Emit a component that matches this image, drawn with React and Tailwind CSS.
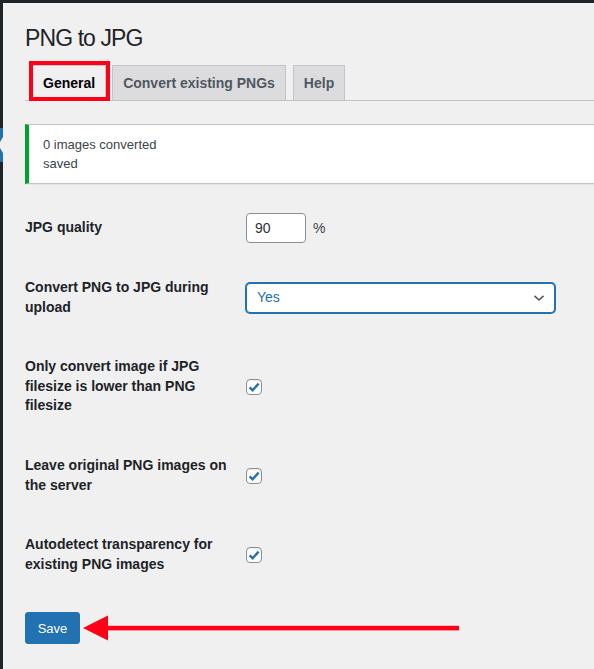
import React from "react";

const Check = () => (
  <span className="flex h-4 w-4 items-center justify-center rounded-[4px] border border-[#8c8f94] bg-white shadow-[inset_0_1px_2px_rgba(0,0,0,0.1)]">
    <svg width="14" height="14" viewBox="0 0 14 14">
      <path d="M2.6 7.4 L5.6 10.3 L11.6 3.6" fill="none" stroke="#2271b1" strokeWidth="2.4" strokeLinejoin="miter" />
    </svg>
  </span>
);

function Row({ label, children }) {
  return (
    <div className="flex items-center">
      <div className="w-[221px] shrink-0 py-[20px] pr-[10px] text-[14px] font-bold leading-[19.6px] whitespace-nowrap text-[#1d2327]">
        {label}
      </div>
      <div className="py-[15px] flex items-center">{children}</div>
    </div>
  );
}

export default function App() {
  return (
    <div
      className="min-h-[669px] w-[594px] overflow-hidden bg-[#f0f0f1]"
      style={{ fontFamily: '"Liberation Sans", Arial, sans-serif' }}
    >
      <div className="h-[3px] bg-[#1d2327]" />
      <div className="flex min-h-[666px]">
        {/* admin menu edge */}
        <div className="w-[3px] shrink-0 bg-[#1d2327] pt-[125px]">
          <svg width="3" height="34" viewBox="0 0 3 34" className="block">
            <rect width="3" height="34" fill="#2271b1" />
            <polygon points="3,9 0,14 0,20 3,25" fill="#f0f0f1" />
          </svg>
        </div>

        <div className="min-w-0 flex-1 pl-[22px]">
          <h1 className="pt-[20px] text-[23px] font-normal leading-[30px] tracking-[-0.9px] text-[#1d2327]">
            PNG to JPG
          </h1>

          {/* tabs */}
          <div className="mt-[12px] flex border-b border-[#c3c4c7] pl-[7px]">
            <div className="relative -mb-px">
              <div className="border border-[#c3c4c7] border-b-[#f0f0f1] bg-[#f0f0f1] px-[10px] py-[5px] text-[14px] font-bold leading-[24px] text-black">
                General
              </div>
              <span className="pointer-events-none absolute -top-[4px] -left-[3px] -right-[4px] bottom-0 border-[4px] border-[#ff0019]" />
            </div>
            <div className="-mb-px ml-[6px] border border-[#c3c4c7] bg-[#dcdcde] px-[10px] py-[5px] text-[14px] font-bold leading-[24px] text-[#50575e]">
              Convert existing PNGs
            </div>
            <div className="-mb-px ml-[7px] border border-[#c3c4c7] bg-[#dcdcde] px-[10px] py-[5px] text-[14px] font-bold leading-[24px] text-[#50575e]">
              Help
            </div>
          </div>

          {/* notice */}
          <div className="-mr-[20px] mt-[23px] border-y border-r border-[#c3c4c7] border-l-[4px] border-l-[#00a32a] bg-white pl-[14px] pr-[12px] py-px shadow-[0_1px_1px_rgba(0,0,0,0.04)]">
            <p className="my-[6.5px] py-[2px] text-[13px] leading-[19.5px] text-[#3c434a]">
              0 images converted
              <br />
              saved
            </p>
          </div>

          {/* form */}
          <div className="mt-[14px]">
            <Row label="JPG quality">
              <input
                defaultValue="90"
                className="h-[30px] w-[60px] rounded-[4px] border border-[#8c8f94] bg-white px-[8px] text-[14px] text-[#2c3338] outline-none"
                style={{ fontFamily: '"Liberation Sans", Arial, sans-serif' }}
              />
              <span className="ml-[7px] text-[14px] text-[#3c434a]">%</span>
            </Row>
            <Row
              label={
                <>
                  Convert PNG to JPG during
                  <br />
                  upload
                </>
              }
            >
              <div className="flex h-[30px] w-[309px] items-center justify-between rounded-[4px] border border-[#2271b1] bg-white pl-[10px] pr-[9px] shadow-[0_0_0_1px_#2271b1]">
                <span className="text-[14px] text-[#2271b1]">Yes</span>
                <svg width="12" height="8" viewBox="0 0 12 8">
                  <path d="M1.5 1.8 L6 6 L10.5 1.8" fill="none" stroke="#50575e" strokeWidth="1.6" />
                </svg>
              </div>
            </Row>
            <Row
              label={
                <>
                  Only convert image if JPG
                  <br />
                  filesize is lower than PNG
                  <br />
                  filesize
                </>
              }
            >
              <Check />
            </Row>
            <Row
              label={
                <>
                  Leave original PNG images on
                  <br />
                  the server
                </>
              }
            >
              <Check />
            </Row>
            <Row
              label={
                <>
                  Autodetect transparency for
                  <br />
                  existing PNG images
                </>
              }
            >
              <Check />
            </Row>
          </div>

          {/* save + annotation arrow */}
          <div className="mt-[18px] flex items-center">
            <button className="flex h-[32px] w-[55px] items-center justify-center rounded-[3px] border border-[#2271b1] bg-[#2271b1] text-[13px] text-white">
              Save
            </button>
            <svg width="380" height="28" viewBox="0 0 380 28" className="ml-[2px]">
              <polygon points="1,14 26,1.5 26,26.5" fill="#ff0019" />
              <rect x="24" y="11.8" width="353" height="4.6" fill="#ff0019" />
            </svg>
          </div>
        </div>
      </div>
    </div>
  );
}
